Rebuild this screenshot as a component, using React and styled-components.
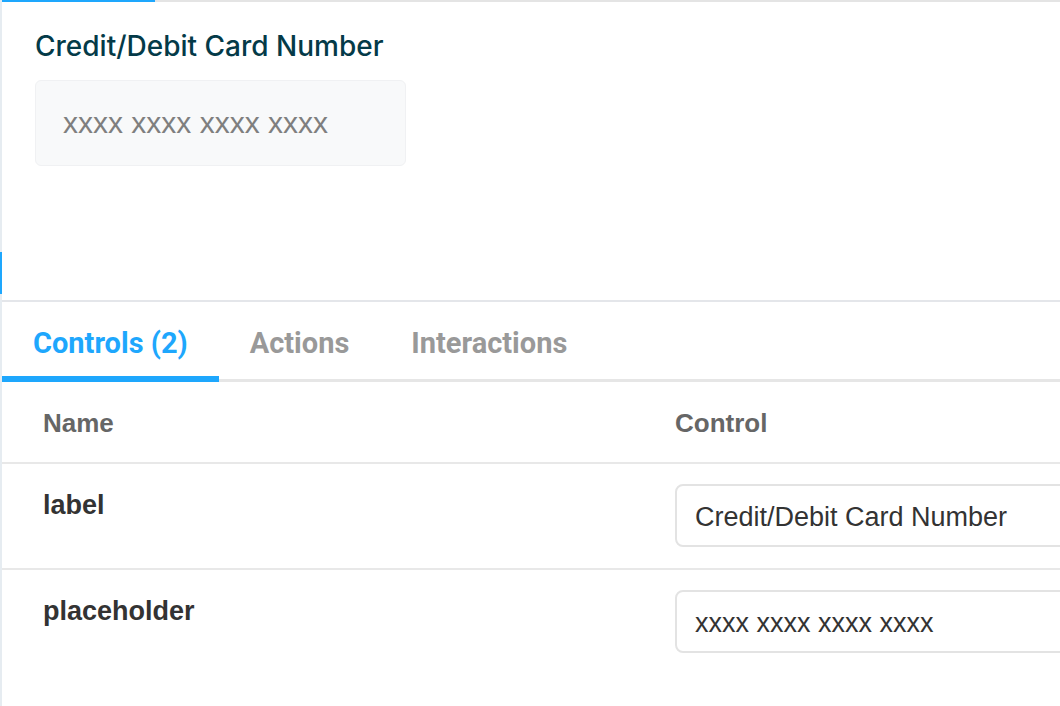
import React from 'react';
import styled, { createGlobalStyle } from 'styled-components';

const GlobalStyle = createGlobalStyle`
  html, body {
    margin: 0;
    padding: 0;
    background: #fff;
    overflow: hidden;
  }
  body {
    font-family: 'Liberation Sans', Arial, sans-serif;
  }
`;

const Page = styled.div`
  display: flex;
  width: 1060px;
  height: 706px;
  overflow: hidden;
`;

const Rail = styled.div`
  display: flex;
  flex-direction: column;
  width: 2px;
  flex: none;
`;

const RailPart = styled.div`
  background: ${p => (p.active ? '#1ea7fd' : '#e6ecf1')};
  height: ${p => (p.size ? `${p.size}px` : 'auto')};
  flex: ${p => (p.size ? 'none' : '1')};
`;

const Main = styled.div`
  flex: 1;
  min-width: 0;
  display: flex;
  flex-direction: column;
  overflow: hidden;
`;

const TopBar = styled.div`
  display: flex;
  height: 2px;
  flex: none;
`;

const TopPart = styled.div`
  background: ${p => (p.active ? '#1ea7fd' : '#e4e4e4')};
  width: ${p => (p.size ? `${p.size}px` : 'auto')};
  flex: ${p => (p.size ? 'none' : '1')};
`;

const Preview = styled.div`
  height: 300px;
  flex: none;
  padding: 26px 0 0 33px;
  box-sizing: border-box;
  border-bottom: 2px solid #e4e6ea;
`;

const FieldLabel = styled.div`
  font-family: Inter, 'Liberation Sans', sans-serif;
  font-weight: 500;
  font-size: 28px;
  line-height: 36px;
  color: #043a48;
  margin-bottom: 16px;
`;

const CardInput = styled.div`
  width: 371px;
  height: 86px;
  box-sizing: border-box;
  background: #f8f9fa;
  border: 1px solid #f0f1f3;
  border-radius: 6px;
  display: flex;
  align-items: center;
  padding-left: 27px;
  font-size: 30px;
  color: #7f7f7f;
`;

const TabBar = styled.div`
  display: flex;
  height: 80px;
  flex: none;
  box-shadow: inset 0 -3px 0 #e6e6e6;
`;

const Tab = styled.div`
  padding: 2px 31px 0;
  display: flex;
  align-items: center;
  font-family: Roboto, 'Liberation Sans', sans-serif;
  font-weight: 700;
  font-size: 29px;
  color: ${p => (p.active ? '#1ea7fd' : '#999999')};
  box-shadow: ${p => (p.active ? 'inset 0 -6px 0 #1ea7fd' : 'none')};
`;

const Row = styled.div`
  display: grid;
  grid-template-columns: 673px 1fr;
  border-bottom: 2px solid ${p => (p.last ? 'transparent' : '#e8e8e8')};
  flex: none;
`;

const HeadCell = styled.div`
  padding: 21px 0 19px ${p => (p.first ? '41px' : '0')};
  line-height: 40px;
  font-size: 26px;
  font-weight: 700;
  color: #666666;
`;

const NameCell = styled.div`
  padding: 21px 0 20px 41px;
  line-height: 40px;
  font-size: 27px;
  font-weight: 700;
  color: #333333;
`;

const ControlCell = styled.div`
  padding: 20px 0 21px 0;
`;

const TextControl = styled.div`
  width: 460px;
  height: 63px;
  box-sizing: border-box;
  border: 2px solid #e3e3e3;
  border-radius: 8px;
  display: flex;
  align-items: center;
  padding: 3px 0 0 18px;
  font-size: 27px;
  color: #333333;
  background: #fff;
`;

const args = [
  { name: 'label', value: 'Credit/Debit Card Number' },
  { name: 'placeholder', value: 'xxxx xxxx xxxx xxxx' }
];

export default function App() {
  return (
    <Page>
      <GlobalStyle />
      <Rail>
        <RailPart size={252} />
        <RailPart active size={42} />
        <RailPart />
      </Rail>
      <Main>
        <TopBar>
          <TopPart active size={153} />
          <TopPart />
        </TopBar>
        <Preview>
          <FieldLabel>Credit/Debit Card Number</FieldLabel>
          <CardInput>xxxx xxxx xxxx xxxx</CardInput>
        </Preview>
        <TabBar>
          <Tab active>Controls (2)</Tab>
          <Tab>Actions</Tab>
          <Tab>Interactions</Tab>
        </TabBar>
        <Row>
          <HeadCell first>Name</HeadCell>
          <HeadCell>Control</HeadCell>
        </Row>
        {args.map((a, i) => (
          <Row key={a.name} last={i === args.length - 1}>
            <NameCell>{a.name}</NameCell>
            <ControlCell>
              <TextControl>{a.value}</TextControl>
            </ControlCell>
          </Row>
        ))}
      </Main>
    </Page>
  );
}
